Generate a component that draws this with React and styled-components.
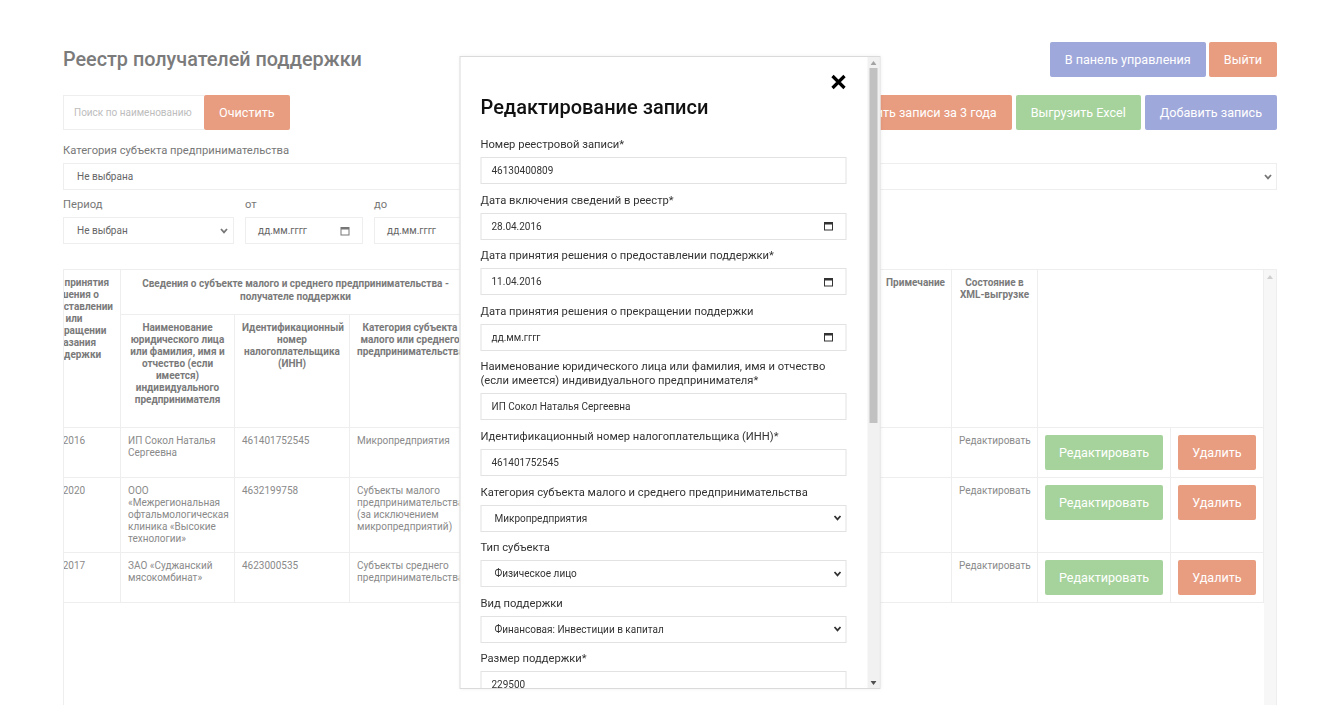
import React, { useLayoutEffect, useRef } from "react";
import styled, { createGlobalStyle } from "styled-components";

const tones = {
  salmon: "#e89c80",
  blue: "#9fa8da",
  green: "#a5d39b",
};

const GlobalStyle = createGlobalStyle`
  * { box-sizing: border-box; }
  html, body { margin: 0; padding: 0; background: #fff; }
  body { font-family: Roboto, "Noto Sans", Arial, sans-serif; color: #333; }
`;

// Page
const Page = styled.div`
  padding: 42px 63px 0;
`;

const TopRow = styled.div`
  display: flex;
  align-items: center;
  justify-content: space-between;
  height: 35px;
`;

const Title = styled.h1`
  margin: 0;
  font-size: 19.8px;
  font-weight: 500;
  color: #7b7b7b;
`;

const ButtonGroup = styled.div`
  display: flex;
  gap: ${(p) => p.$gap || 4}px;
`;

const Button = styled.button`
  height: 35px;
  padding: 0 15px;
  border: none;
  border-radius: 2px;
  background: ${(p) => tones[p.$tone]};
  color: #fff;
  font: 12.6px Roboto, "Noto Sans", Arial, sans-serif;
  white-space: nowrap;
  cursor: pointer;
`;

const CellButton = styled(Button)`
  width: 100%;
  padding: 0;
`;

const ToolRow = styled.div`
  display: flex;
  justify-content: space-between;
  margin-top: 18px;
`;

const SearchGroup = styled.div`
  display: flex;
`;

const SearchInput = styled.input`
  width: 141px;
  height: 35px;
  border: 1px solid #eee;
  border-right: none;
  padding: 0 10px;
  font: 10px Roboto, sans-serif;
  color: #555;
  outline: none;
  &::placeholder { color: #bdbdbd; }
`;

const FilterLabel = styled.div`
  font-size: 11.2px;
  line-height: 14px;
  color: #777;
  margin-bottom: 5px;
`;

const CategoryBlock = styled.div`
  margin-top: 14px;
`;

const PeriodRow = styled.div`
  display: flex;
  gap: 11px;
  margin-top: 8px;
`;

const FilterCol = styled.div`
  width: ${(p) => p.$w}px;
`;

const SelectWrap = styled.div`
  position: relative;
  width: 100%;
`;

const Select = styled.select`
  appearance: none;
  -webkit-appearance: none;
  width: 100%;
  height: 27px;
  border: 1px solid ${(p) => (p.$dark ? "#e2e2e2" : "#eee")};
  border-radius: 0;
  background: #fff;
  padding: 0 20px 0 13px;
  font: 10px Roboto, sans-serif;
  color: ${(p) => (p.$dark ? "#333" : "#666")};
  outline: none;
`;

const Chevron = styled.svg`
  position: absolute;
  right: ${(p) => p.$right || 6}px;
  top: 50%;
  margin-top: -3px;
  pointer-events: none;
`;

const DateBox = styled.div`
  display: flex;
  align-items: center;
  justify-content: space-between;
  height: 27px;
  border: 1px solid ${(p) => (p.$dark ? "#e2e2e2" : "#eee")};
  padding: 0 12px 0 ${(p) => (p.$dark ? 10 : 12)}px;
  font-size: 10px;
  color: ${(p) => (p.$dark ? "#333" : "#666")};
  background: #fff;
`;

// Scrollbars (drawn, the page runs with hidden native ones)
const ScrollBar = styled.div`
  flex: none;
  width: ${(p) => p.$w}px;
  display: flex;
  flex-direction: column;
  background: ${(p) => p.$track};
`;

const ScrollArrow = styled.div`
  height: ${(p) => p.$h}px;
  display: flex;
  align-items: center;
  justify-content: center;
`;

const ScrollTrack = styled.div`
  flex: 1;
  padding: 0 2px;
`;

const Thumb = styled.div`
  height: ${(p) => p.$h}px;
  background: #c1c1c1;
`;

const Triangle = ({ down, color }) => (
  <svg width="6" height="4" viewBox="0 0 6 4">
    <polygon points={down ? "0,0 6,0 3,4" : "0,4 6,4 3,0"} fill={color} />
  </svg>
);

// Table
const TableFrame = styled.div`
  margin-top: 25px;
  height: 470px;
  border: 1px solid #eee;
  display: flex;
`;

const TableViewport = styled.div`
  flex: 1;
  min-width: 0;
  overflow: hidden;
`;

const Table = styled.table`
  width: ${(p) => p.$w}px;
  table-layout: fixed;
  border-collapse: separate;
  border-spacing: 0;
  font-size: 10px;
  line-height: 12px;
`;

const Col = styled.col`
  width: ${(p) => p.$w}px;
`;

const HeadRow = styled.tr`
  height: ${(p) => p.$h}px;
`;

const Th = styled.th`
  border-right: 1px solid #eee;
  border-bottom: 1px solid #eee;
  padding: 7px;
  vertical-align: top;
  text-align: center;
  font-weight: 700;
  color: #7a7a7a;
  line-height: ${(p) => (p.$group ? 13 : 12)}px;
`;

const Td = styled.td`
  border-right: 1px solid #eee;
  border-bottom: 1px solid #eee;
  padding: 7px;
  vertical-align: top;
  color: #8a8a8a;
`;

// Modal
const Modal = styled.div`
  position: fixed;
  top: 56px;
  left: 50%;
  transform: translateX(-50%);
  width: 421px;
  height: 633px;
  display: flex;
  background: #fff;
  border: 1px solid #dadada;
  box-shadow: 0 0 4px rgba(0, 0, 0, 0.06);
  overflow: hidden;
`;

const ModalScroll = styled.div`
  flex: 1;
  min-width: 0;
  overflow: hidden;
`;

const ModalBody = styled.div`
  padding: 17px 21px 24px 20px;
`;

const CloseRow = styled.div`
  display: flex;
  justify-content: flex-end;
  height: 16px;
`;

const CloseButton = styled.button`
  width: 16px;
  height: 16px;
  padding: 0;
  border: none;
  background: none;
  display: flex;
  cursor: pointer;
`;

const ModalTitle = styled.h2`
  margin: 5px 0 19px;
  font-size: 20px;
  line-height: 24px;
  font-weight: 500;
  color: #111;
`;

const Field = styled.div`
  margin-bottom: 9.6px;
`;

const FieldLabel = styled.label`
  display: block;
  font-size: 11.2px;
  line-height: 14px;
  color: #333;
  margin-bottom: 5px;
`;

const TextInput = styled.input`
  width: 100%;
  height: 27px;
  border: 1px solid #e2e2e2;
  padding: 0 10px;
  font: 10px Roboto, sans-serif;
  color: #333;
  outline: none;
`;

const TextArea = styled.textarea`
  width: 100%;
  height: 60px;
  border: 1px solid #e2e2e2;
  padding: 8px 10px;
  font: 10px Roboto, sans-serif;
  resize: none;
`;

const SaveRow = styled.div`
  margin-top: 16px;
`;

const ChevronIcon = ({ right, color = "#333" }) => (
  <Chevron $right={right} width="8" height="6" viewBox="0 0 8 6">
    <polyline points="1,1 4,4.3 7,1" fill="none" stroke={color} strokeWidth="1.8" />
  </Chevron>
);

const CalendarIcon = ({ color = "#333" }) => (
  <svg width="10" height="10" viewBox="0 0 10 10">
    <rect x="1" y="1.5" width="8" height="7.5" fill="none" stroke={color} strokeWidth="1" />
    <rect x="1" y="1.5" width="8" height="2" fill={color} />
  </svg>
);

const SelectBox = ({ value, dark, right, chevron }) => (
  <SelectWrap>
    <Select $dark={dark} defaultValue={value}>
      <option>{value}</option>
    </Select>
    <ChevronIcon right={right} color={chevron} />
  </SelectWrap>
);

const COLS = [100, 100, 93, 114, 115, 121, 100, 100, 100, 108, 73, 86, 133, 93];
const TABLE_WIDTH = COLS.reduce((a, b) => a + b, 0);

const ROWS = [
  {
    num: "46130400809",
    inc: "28.04.2016",
    dec: "11.04.2016",
    name: "ИП Сокол Наталья Сергеевна",
    inn: "461401752545",
    cat: "Микропредприятия",
    kind: "Финансовая",
    form: "Инвестиции в капитал",
    sum: "229500",
    term: "",
  },
  {
    num: "46130400812",
    inc: "15.12.2020",
    dec: "01.12.2020",
    name: "ООО «Межрегиональная офтальмологическая клиника «Высокие технологии»",
    inn: "4632199758",
    cat: "Субъекты малого предпринимательства (за исключением микропредприятий)",
    kind: "Финансовая",
    form: "Субсидия",
    sum: "500000",
    term: "",
  },
  {
    num: "46130400815",
    inc: "20.03.2017",
    dec: "14.03.2017",
    name: "ЗАО «Суджанский мясокомбинат»",
    inn: "4623000535",
    cat: "Субъекты среднего предпринимательства",
    kind: "Финансовая",
    form: "Займ",
    sum: "1000000",
    term: "",
  },
];

const RegistryTable = () => {
  const ref = useRef(null);
  useLayoutEffect(() => {
    const el = ref.current;
    if (el) el.scrollLeft = el.scrollWidth;
  }, []);

  return (
    <TableFrame>
      <TableViewport ref={ref}>
        <Table $w={TABLE_WIDTH}>
          <colgroup>
            {COLS.map((w, i) => (
              <Col key={i} $w={w} />
            ))}
          </colgroup>
          <thead>
            <HeadRow $h={45}>
              <Th rowSpan={2}>Номер реестровой записи</Th>
              <Th rowSpan={2}>Дата включения сведений в реестр</Th>
              <Th rowSpan={2}>
                Дата принятия решения о предоставлении или прекращении оказания поддержки
              </Th>
              <Th colSpan={3} $group>
                Сведения о субъекте малого и среднего предпринимательства - получателе поддержки
              </Th>
              <Th colSpan={4} $group>
                Сведения о предоставленной поддержке
              </Th>
              <Th rowSpan={2}>Примечание</Th>
              <Th rowSpan={2}>Состояние в XML-выгрузке</Th>
              <Th rowSpan={2} colSpan={2} />
            </HeadRow>
            <HeadRow $h={113}>
              <Th>
                Наименование юридического лица или фамилия, имя и отчество (если имеется)
                индивидуального предпринимателя
              </Th>
              <Th>Идентификационный номер налогоплательщика (ИНН)</Th>
              <Th>Категория субъекта малого или среднего предпринимательства</Th>
              <Th>Вид поддержки</Th>
              <Th>Форма поддержки</Th>
              <Th>Размер поддержки</Th>
              <Th>Срок оказания поддержки</Th>
            </HeadRow>
          </thead>
          <tbody>
            {ROWS.map((r) => (
              <tr key={r.num}>
                <Td>{r.num}</Td>
                <Td>{r.inc}</Td>
                <Td>{r.dec}</Td>
                <Td>{r.name}</Td>
                <Td>{r.inn}</Td>
                <Td>{r.cat}</Td>
                <Td>{r.kind}</Td>
                <Td>{r.form}</Td>
                <Td>{r.sum}</Td>
                <Td>{r.term}</Td>
                <Td />
                <Td>Редактировать</Td>
                <Td>
                  <CellButton $tone="green">Редактировать</CellButton>
                </Td>
                <Td>
                  <CellButton $tone="salmon">Удалить</CellButton>
                </Td>
              </tr>
            ))}
          </tbody>
        </Table>
      </TableViewport>
      <ScrollBar $w={12} $track="#f7f7f7">
        <ScrollArrow $h={14}>
          <Triangle color="#cfcfcf" />
        </ScrollArrow>
      </ScrollBar>
    </TableFrame>
  );
};

const EditModal = () => (
  <Modal>
    <ModalScroll>
      <ModalBody>
        <CloseRow>
          <CloseButton aria-label="Закрыть">
            <svg width="16" height="16" viewBox="0 0 16 16">
              <path d="M2 2 L14 14 M14 2 L2 14" stroke="#000" strokeWidth="3.2" />
            </svg>
          </CloseButton>
        </CloseRow>
        <ModalTitle>Редактирование записи</ModalTitle>

        <Field>
          <FieldLabel>Номер реестровой записи*</FieldLabel>
          <TextInput defaultValue="46130400809" />
        </Field>
        <Field>
          <FieldLabel>Дата включения сведений в реестр*</FieldLabel>
          <DateBox $dark>
            28.04.2016
            <CalendarIcon />
          </DateBox>
        </Field>
        <Field>
          <FieldLabel>Дата принятия решения о предоставлении поддержки*</FieldLabel>
          <DateBox $dark>
            11.04.2016
            <CalendarIcon />
          </DateBox>
        </Field>
        <Field>
          <FieldLabel>Дата принятия решения о прекращении поддержки</FieldLabel>
          <DateBox $dark>
            дд.мм.гггг
            <CalendarIcon />
          </DateBox>
        </Field>
        <Field>
          <FieldLabel>
            Наименование юридического лица или фамилия, имя и отчество (если имеется)
            индивидуального предпринимателя*
          </FieldLabel>
          <TextInput defaultValue="ИП Сокол Наталья Сергеевна" />
        </Field>
        <Field>
          <FieldLabel>Идентификационный номер налогоплательщика (ИНН)*</FieldLabel>
          <TextInput defaultValue="461401752545" />
        </Field>
        <Field>
          <FieldLabel>Категория субъекта малого и среднего предпринимательства</FieldLabel>
          <SelectBox dark right={5} value="Микропредприятия" />
        </Field>
        <Field>
          <FieldLabel>Тип субъекта</FieldLabel>
          <SelectBox dark right={5} value="Физическое лицо" />
        </Field>
        <Field>
          <FieldLabel>Вид поддержки</FieldLabel>
          <SelectBox dark right={5} value="Финансовая: Инвестиции в капитал" />
        </Field>
        <Field>
          <FieldLabel>Размер поддержки*</FieldLabel>
          <TextInput defaultValue="229500" />
        </Field>
        <Field>
          <FieldLabel>Срок оказания поддержки</FieldLabel>
          <DateBox $dark>
            дд.мм.гггг
            <CalendarIcon />
          </DateBox>
        </Field>
        <Field>
          <FieldLabel>
            Информация о нарушении порядка и условий предоставления поддержки (если имеется)
          </FieldLabel>
          <TextArea />
        </Field>
        <Field>
          <FieldLabel>Примечание</FieldLabel>
          <TextInput />
        </Field>
        <SaveRow>
          <Button $tone="green">Сохранить</Button>
        </SaveRow>
      </ModalBody>
    </ModalScroll>
    <ScrollBar $w={12} $track="#f1f1f1">
      <ScrollArrow $h={11}>
        <Triangle color="#a3a3a3" />
      </ScrollArrow>
      <ScrollTrack>
        <Thumb $h={355} />
      </ScrollTrack>
      <ScrollArrow $h={11}>
        <Triangle down color="#505050" />
      </ScrollArrow>
    </ScrollBar>
  </Modal>
);

const App = () => (
  <>
    <GlobalStyle />
    <Page>
      <TopRow>
        <Title>Реестр получателей поддержки</Title>
        <ButtonGroup $gap={3}>
          <Button $tone="blue">В панель управления</Button>
          <Button $tone="salmon">Выйти</Button>
        </ButtonGroup>
      </TopRow>

      <ToolRow>
        <SearchGroup>
          <SearchInput placeholder="Поиск по наименованию" />
          <Button $tone="salmon">Очистить</Button>
        </SearchGroup>
        <ButtonGroup>
          <Button $tone="salmon">Удалить записи за 3 года</Button>
          <Button $tone="green">Выгрузить Excel</Button>
          <Button $tone="blue">Добавить запись</Button>
        </ButtonGroup>
      </ToolRow>

      <CategoryBlock>
        <FilterLabel>Категория субъекта предпринимательства</FilterLabel>
        <SelectBox value="Не выбрана" right={5} chevron="#777" />
      </CategoryBlock>

      <PeriodRow>
        <FilterCol $w={171}>
          <FilterLabel>Период</FilterLabel>
          <SelectBox value="Не выбран" right={6} chevron="#777" />
        </FilterCol>
        <FilterCol $w={118}>
          <FilterLabel>от</FilterLabel>
          <DateBox>
            дд.мм.гггг
            <CalendarIcon color="#777" />
          </DateBox>
        </FilterCol>
        <FilterCol $w={118}>
          <FilterLabel>до</FilterLabel>
          <DateBox>
            дд.мм.гггг
            <CalendarIcon color="#777" />
          </DateBox>
        </FilterCol>
      </PeriodRow>

      <RegistryTable />
    </Page>
    <EditModal />
  </>
);

export default App;
